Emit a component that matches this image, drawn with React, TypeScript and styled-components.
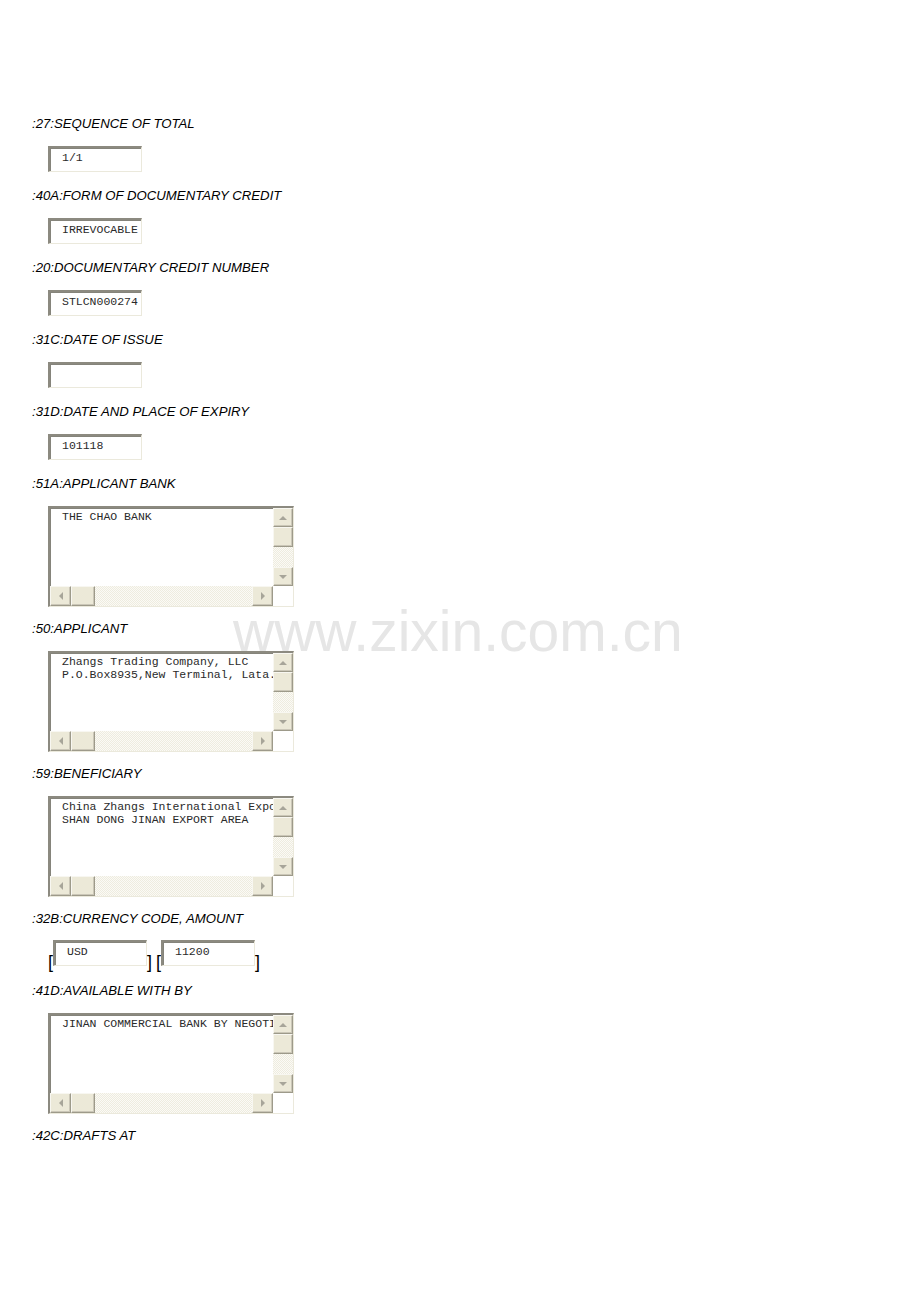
import styled, { createGlobalStyle, css } from "styled-components";

const GlobalStyle = createGlobalStyle`
    html, body {
        margin: 0;
        padding: 0;
        background: #ffffff;
    }
`;

const StyledPage = styled.main`
    position: relative;
    min-height: 1302px;
    box-sizing: border-box;
    padding: 116px 0 0 32px;
    font-family: "Liberation Sans", Arial, sans-serif;
`;

const StyledWatermark = styled.div`
    position: absolute;
    left: 233px;
    top: 603px;
    font-family: "Liberation Sans", Arial, sans-serif;
    font-size: 57px;
    line-height: 57px;
    color: #e6e6e6;
    pointer-events: none;
    white-space: nowrap;
    z-index: 2;
`;

const StyledBlock = styled.section<{ $after: number }>`
    margin-bottom: ${(p) => p.$after}px;
`;

const StyledLabel = styled.p<{ $gap?: number }>`
    margin: 0 0 ${(p) => p.$gap ?? 14}px;
    font-size: 13.2px;
    line-height: 16px;
    font-style: italic;
    color: #000;
`;

const sunkenBorder = css`
    box-sizing: border-box;
    border-top: 2px solid #8c8a80;
    border-left: 2px solid #8c8a80;
    border-right: 1px solid #ebe9dc;
    border-bottom: 1px solid #ebe9dc;
    box-shadow: inset 1px 1px 0 #85847b;
    background: #ffffff;
`;

const fieldFont = css`
    font-family: "Liberation Mono", "Courier New", monospace;
    font-size: 11.5px;
    color: #2a2a2a;
`;

const StyledInput = styled.div`
    ${sunkenBorder}
    ${fieldFont}
    width: 94px;
    height: 26px;
    margin-left: 16px;
    padding: 0 0 3px 12px;
    line-height: 20px;
    white-space: pre;
    overflow: hidden;
`;

const StyledAreaBox = styled.div`
    ${sunkenBorder}
    width: 246px;
    height: 101px;
    margin-left: 16px;
    display: grid;
    grid-template-columns: 1fr 20px;
    grid-template-rows: 1fr 20px;
`;

const StyledAreaText = styled.div`
    ${fieldFont}
    line-height: 13px;
    padding: 2px 0 0 12px;
    white-space: pre;
    overflow: hidden;
`;

const StyledScrollV = styled.div`
    display: flex;
    flex-direction: column;
`;

const StyledScrollH = styled.div`
    display: flex;
`;

const StyledCorner = styled.div`
    background: #ffffff;
`;

const StyledTrack = styled.div`
    flex: 1;
    background-color: #ffffff;
    background-image: repeating-conic-gradient(#eeecdf 0 25%, #fbfaf6 0 50%);
    background-size: 2px 2px;
`;

const StyledButton = styled.div<{ $w: number; $h: number }>`
    box-sizing: border-box;
    width: ${(p) => p.$w}px;
    height: ${(p) => p.$h}px;
    flex: none;
    background: #ece9d8;
    border-top: 1px solid #f8f7f1;
    border-left: 1px solid #f8f7f1;
    border-right: 1px solid #9d9a8a;
    border-bottom: 1px solid #9d9a8a;
    box-shadow: inset -1px -1px 0 #cbc7b8;
    display: flex;
    align-items: center;
    justify-content: center;
`;

type Dir = "up" | "down" | "left" | "right";

const StyledArrow = styled.span<{ $dir: Dir }>`
    width: 0;
    height: 0;
    border-style: solid;
    border-color: transparent;
    ${(p) =>
        p.$dir === "up" &&
        css`
            border-width: 0 4px 4px;
            border-bottom-color: #a7a599;
        `}
    ${(p) =>
        p.$dir === "down" &&
        css`
            border-width: 4px 4px 0;
            border-top-color: #a7a599;
        `}
    ${(p) =>
        p.$dir === "left" &&
        css`
            border-width: 4px 4px 4px 0;
            border-right-color: #a7a599;
        `}
    ${(p) =>
        p.$dir === "right" &&
        css`
            border-width: 4px 0 4px 4px;
            border-left-color: #a7a599;
        `}
`;

const StyledRow = styled.div`
    display: flex;
    align-items: flex-start;
    height: 32px;
    padding-left: 16px;
`;

const StyledBracket = styled.span<{ $space?: boolean }>`
    margin: 12px 0 0 ${(p) => (p.$space ? 4 : 0)}px;
    font-family: "Liberation Sans", Arial, sans-serif;
    font-size: 18px;
    line-height: 20px;
    height: 20px;
    color: #000;
`;

const StyledInlineInput = styled(StyledInput)`
    margin-left: 0;
`;

const TextBox = ({ label, value }: { label: string; value: string }) => (
    <StyledBlock $after={16}>
        <StyledLabel>{label}</StyledLabel>
        <StyledInput>{value}</StyledInput>
    </StyledBlock>
);

const TextArea = ({ label, lines }: { label: string; lines: string[] }) => (
    <StyledBlock $after={14}>
        <StyledLabel>{label}</StyledLabel>
        <StyledAreaBox>
            <StyledAreaText>{lines.join("\n")}</StyledAreaText>
            <StyledScrollV>
                <StyledButton $w={20} $h={19}>
                    <StyledArrow $dir="up" />
                </StyledButton>
                <StyledButton $w={20} $h={20} />
                <StyledTrack />
                <StyledButton $w={20} $h={19}>
                    <StyledArrow $dir="down" />
                </StyledButton>
            </StyledScrollV>
            <StyledScrollH>
                <StyledButton $w={21} $h={20}>
                    <StyledArrow $dir="left" />
                </StyledButton>
                <StyledButton $w={24} $h={20} />
                <StyledTrack />
                <StyledButton $w={21} $h={20}>
                    <StyledArrow $dir="right" />
                </StyledButton>
            </StyledScrollH>
            <StyledCorner />
        </StyledAreaBox>
    </StyledBlock>
);

export default function App() {
    return (
        <>
            <GlobalStyle />
            <StyledPage>
                <TextBox label=":27:SEQUENCE OF TOTAL" value="1/1" />
                <TextBox label=":40A:FORM OF DOCUMENTARY CREDIT" value="IRREVOCABLE" />
                <TextBox label=":20:DOCUMENTARY CREDIT NUMBER" value="STLCN000274" />
                <TextBox label=":31C:DATE OF ISSUE" value="" />
                <TextBox label=":31D:DATE AND PLACE OF EXPIRY" value="101118" />
                <TextArea label=":51A:APPLICANT BANK" lines={["THE CHAO BANK"]} />
                <TextArea
                    label=":50:APPLICANT"
                    lines={["Zhangs Trading Company, LLC", "P.O.Box8935,New Terminal, Lata. Vista, Ottawa"]}
                />
                <TextArea
                    label=":59:BENEFICIARY"
                    lines={["China Zhangs International Export", "SHAN DONG JINAN EXPORT AREA"]}
                />
                <StyledBlock $after={11}>
                    <StyledLabel $gap={13}>:32B:CURRENCY CODE, AMOUNT</StyledLabel>
                    <StyledRow>
                        <StyledBracket>[</StyledBracket>
                        <StyledInlineInput>USD</StyledInlineInput>
                        <StyledBracket>]</StyledBracket>
                        <StyledBracket $space>[</StyledBracket>
                        <StyledInlineInput>11200</StyledInlineInput>
                        <StyledBracket>]</StyledBracket>
                    </StyledRow>
                </StyledBlock>
                <TextArea
                    label=":41D:AVAILABLE WITH BY"
                    lines={["JINAN COMMERCIAL BANK BY NEGOTIATION"]}
                />
                <StyledLabel>:42C:DRAFTS AT</StyledLabel>
                <StyledWatermark>www.zixin.com.cn</StyledWatermark>
            </StyledPage>
        </>
    );
}
